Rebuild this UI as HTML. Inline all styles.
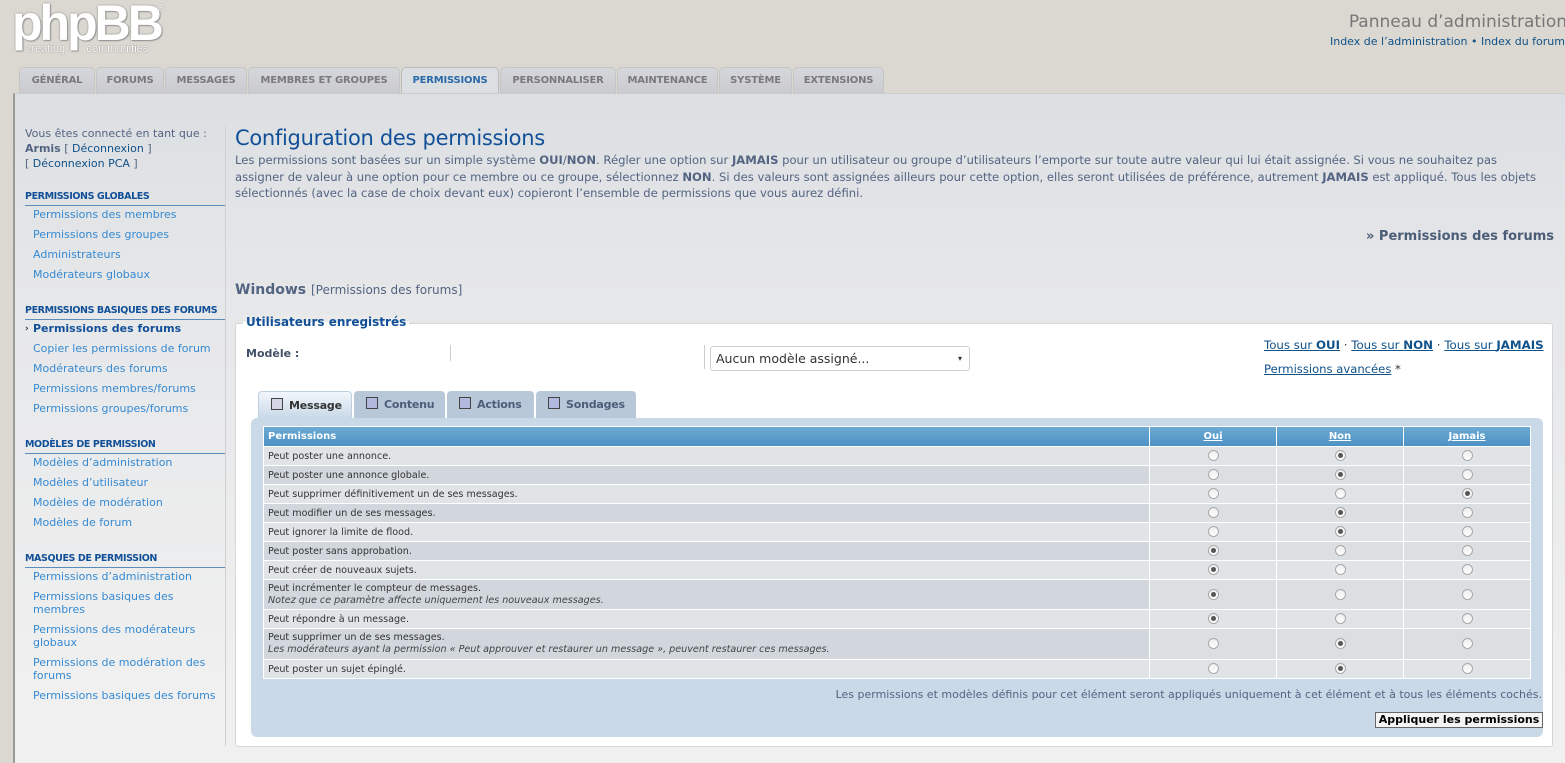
<!DOCTYPE html>
<html><head><meta charset="utf-8"><style>
*{box-sizing:border-box;margin:0;padding:0}
body{width:1565px;height:753px;overflow:hidden;background:#dbd8d1;font-family:"DejaVu Sans","Liberation Sans",sans-serif;position:relative;color:#536482}
.abs{position:absolute}
a{color:#105289;text-decoration:none}
.logo{left:12px;top:-2px;font-family:"Liberation Sans",sans-serif;font-weight:bold;font-size:50px;color:#fff;letter-spacing:-3px;text-shadow:0 0 2px #888,1px 1px 1px #999;line-height:50px;white-space:nowrap}
.logosm{left:26px;top:43px;font-size:11px;color:#fff;text-shadow:0 0 1px #555;font-family:"Liberation Sans",sans-serif;white-space:nowrap}
.tab{position:absolute;top:67px;height:26px;border:1px solid #c5c5c5;border-bottom:none;border-radius:5px 5px 0 0;background:linear-gradient(#d6d7da,#cacbcf);font-size:10px;font-weight:bold;color:#7a7a7a;line-height:26px;text-align:center;white-space:nowrap;letter-spacing:-.2px}
.tab.on{background:#dcdfe2;color:#2a6aa8;height:28px;border-color:#bbb}
.panel{left:13px;top:93px;width:1560px;height:670px;background:linear-gradient(#dcdfe2 0,#e6e7e9 200px,#f0f0f0 600px);border-left:2px solid #9a9a9a;border-top:1px solid #ccc}
.menu{left:25px;top:126px;width:200px;font-size:11px;line-height:15px}
.menu h3{font-size:9.5px;line-height:12px;font-weight:bold;color:#115098;border-bottom:1px solid #5a8cbc;padding-bottom:2px;margin-top:20px;margin-bottom:-1px;letter-spacing:-.4px;white-space:nowrap}
.menu a{display:block;color:#368ad2;padding-left:8px;line-height:20px}
.menu a.cur{font-weight:bold;color:#115098;position:relative}
.sep{left:225px;top:126px;width:1px;height:620px;background:#d0d0d0}
h1{left:235px;top:126px;font-family:"DejaVu Sans",sans-serif;font-weight:normal;font-size:21px;color:#115098;letter-spacing:-.3px}
.intro{left:235px;top:152px;width:1310px;font-size:11.6px;line-height:16.5px;color:#536482}
.fs{left:235px;top:323px;width:1318px;height:424px;background:#fff;border:1px solid #d5d5d5;border-radius:3px}
.legend{left:243px;top:315px;font-size:12px;font-weight:bold;color:#115098;background:linear-gradient(#eaeaea 50%,#fff 50%);padding:0 3px}
.blue{left:251px;top:418px;width:1292px;height:319px;background:#c9d9e8;border-radius:6px}
table{position:absolute;left:263px;top:426px;width:1268px;border-collapse:separate;border-spacing:1px;background:#fff;font-size:9.6px;color:#333}
th{background:linear-gradient(#6aaad3,#4e92c4);color:#fff;height:19px;font-size:10px;text-align:left;padding-left:4px}
th.c{text-align:center;text-decoration:underline;padding:0}
td{padding:0 4px;height:18px;background:#e1e4e7}
tr.e td{background:#dcdfe2}
tr.e td.p{background:#d2d7de}
td.r{text-align:center;padding:0}
i.em{color:#444}
.rd{display:inline-block;width:11px;height:11px;border:1px solid #a8a8a8;border-radius:50%;background:linear-gradient(#eee,#fff);vertical-align:middle;position:relative}
.rd.x::after{content:"";position:absolute;left:2px;top:2px;width:5px;height:5px;border-radius:50%;background:#555}
.ptab{top:391px;height:27px;padding:0 0 0 12px;background:#b8c8d8;border-radius:4px 4px 0 0;font-size:11px;font-weight:bold;color:#4c5d77;line-height:28px;white-space:nowrap;letter-spacing:-.2px}
.ptab.on{background:linear-gradient(#f2f7fb,#c9d9e8);color:#333;border:1px solid #c0d0e0;border-bottom:none}
.cb{display:inline-block;width:12px;height:12px;border:1px solid #444;background:#b3b8de;vertical-align:-1px;margin-right:6px}
</style></head><body>
<div class="abs logo">phpBB</div>
<div class="abs" style="left:156px;top:3px;font-size:10px;color:#fff;text-shadow:0 0 1px #777">®</div>
<div class="abs logosm">creating &nbsp;&nbsp;&nbsp;&nbsp;&nbsp;&nbsp;communities</div>
<div class="abs" style="right:-2px;top:12px;font-size:17px;color:#777;font-family:'DejaVu Sans',sans-serif;white-space:nowrap">Panneau d’administration</div>
<div class="abs" style="right:0;top:35px;font-size:11px;color:#105289;white-space:nowrap">Index de l’administration • Index du forum</div>
<div class="tab" style="left:19px;width:76px">GÉNÉRAL</div>
<div class="tab" style="left:96px;width:68px">FORUMS</div>
<div class="tab" style="left:165px;width:82px">MESSAGES</div>
<div class="tab" style="left:248px;width:152px">MEMBRES ET GROUPES</div>
<div class="tab on" style="left:401px;width:98px">PERMISSIONS</div>
<div class="tab" style="left:500px;width:116px">PERSONNALISER</div>
<div class="tab" style="left:617px;width:101px">MAINTENANCE</div>
<div class="tab" style="left:719px;width:73px">SYSTÈME</div>
<div class="tab" style="left:793px;width:91px">EXTENSIONS</div>
<div class="abs panel"></div>
<div class="abs menu">
<div style="color:#536482">Vous êtes connecté en tant que :<br><b>Armis</b> [ <span style="color:#105289">Déconnexion</span> ]<br>[ <span style="color:#105289">Déconnexion PCA</span> ]</div>
<h3>PERMISSIONS GLOBALES</h3>
<a>Permissions des membres</a><a>Permissions des groupes</a><a>Administrateurs</a><a>Modérateurs globaux</a>
<h3>PERMISSIONS BASIQUES DES FORUMS</h3>
<a class="cur"><span style="position:absolute;left:0;font-size:9px;color:#333">›</span>Permissions des forums</a><a>Copier les permissions de forum</a><a>Modérateurs des forums</a><a>Permissions membres/forums</a><a>Permissions groupes/forums</a>
<h3>MODÈLES DE PERMISSION</h3>
<a>Modèles d’administration</a><a>Modèles d’utilisateur</a><a>Modèles de modération</a><a>Modèles de forum</a>
<h3>MASQUES DE PERMISSION</h3>
<a>Permissions d’administration</a><a style="line-height:13px;padding:3px 0 4px 8px">Permissions basiques des membres</a><a style="line-height:13px;padding:3px 0 4px 8px">Permissions des modérateurs globaux</a><a style="line-height:13px;padding:3px 0 4px 8px">Permissions de modération des forums</a><a>Permissions basiques des forums</a>
</div>
<div class="abs sep"></div>
<h1 class="abs">Configuration des permissions</h1>
<div class="abs intro">Les permissions sont basées sur un simple système <b>OUI</b>/<b>NON</b>. Régler une option sur <b>JAMAIS</b> pour un utilisateur ou groupe d’utilisateurs l’emporte sur toute autre valeur qui lui était assignée. Si vous ne souhaitez pas assigner de valeur à une option pour ce membre ou ce groupe, sélectionnez <b>NON</b>. Si des valeurs sont assignées ailleurs pour cette option, elles seront utilisées de préférence, autrement <b>JAMAIS</b> est appliqué. Tous les objets sélectionnés (avec la case de choix devant eux) copieront l’ensemble de permissions que vous aurez défini.</div>
<div class="abs" style="right:11px;top:229px;font-size:13px;font-weight:bold;color:#4c5d77">» Permissions des forums</div>
<div class="abs" style="left:235px;top:282px;font-size:14px;font-weight:bold;color:#536482">Windows <span style="font-weight:normal;font-size:12px">[Permissions des forums]</span></div>
<div class="abs fs"></div>
<div class="abs legend">Utilisateurs enregistrés</div>
<div class="abs" style="left:246px;top:347px;font-size:11px;font-weight:bold;color:#425067">Modèle :</div>
<div class="abs" style="left:450px;top:345px;width:1px;height:16px;background:#ccc"></div>
<div class="abs" style="left:704px;top:345px;width:1px;height:24px;background:#ccc"></div>
<div class="abs" style="left:710px;top:346px;width:260px;height:25px;border:1px solid #d0d0d0;border-radius:3px;background:#fff;font-size:12.5px;color:#333;line-height:23px;padding-left:5px">Aucun modèle assigné...<span style="position:absolute;right:7px;font-size:8px">▾</span></div>
<div class="abs" style="left:1264px;top:338px;font-size:11.8px;color:#333;white-space:nowrap"><a style="text-decoration:underline">Tous sur <b>OUI</b></a> · <a style="text-decoration:underline">Tous sur <b>NON</b></a> · <a style="text-decoration:underline">Tous sur <b>JAMAIS</b></a></div>
<div class="abs" style="left:1264px;top:362px;font-size:11.6px;color:#333"><a style="text-decoration:underline">Permissions avancées</a> *</div>
<div class="abs blue"></div>
<div class="abs ptab on" style="left:258px;width:94px"><span class="cb" style="background:#d4d6e6"></span>Message</div>
<div class="abs ptab" style="left:354px;width:91px"><span class="cb"></span>Contenu</div>
<div class="abs ptab" style="left:447px;width:87px"><span class="cb"></span>Actions</div>
<div class="abs ptab" style="left:536px;width:100px"><span class="cb"></span>Sondages</div>
<table>
<tr><th style="width:885px">Permissions</th><th class="c" style="width:126px">Oui</th><th class="c" style="width:126px">Non</th><th class="c">Jamais</th></tr>
<tr><td class="p">Peut poster une annonce.</td><td class="r"><span class="rd"></span></td><td class="r"><span class="rd x"></span></td><td class="r"><span class="rd"></span></td></tr>
<tr class="e"><td class="p">Peut poster une annonce globale.</td><td class="r"><span class="rd"></span></td><td class="r"><span class="rd x"></span></td><td class="r"><span class="rd"></span></td></tr>
<tr><td class="p">Peut supprimer définitivement un de ses messages.</td><td class="r"><span class="rd"></span></td><td class="r"><span class="rd"></span></td><td class="r"><span class="rd x"></span></td></tr>
<tr class="e"><td class="p">Peut modifier un de ses messages.</td><td class="r"><span class="rd"></span></td><td class="r"><span class="rd x"></span></td><td class="r"><span class="rd"></span></td></tr>
<tr><td class="p">Peut ignorer la limite de flood.</td><td class="r"><span class="rd"></span></td><td class="r"><span class="rd x"></span></td><td class="r"><span class="rd"></span></td></tr>
<tr class="e"><td class="p">Peut poster sans approbation.</td><td class="r"><span class="rd x"></span></td><td class="r"><span class="rd"></span></td><td class="r"><span class="rd"></span></td></tr>
<tr><td class="p">Peut créer de nouveaux sujets.</td><td class="r"><span class="rd x"></span></td><td class="r"><span class="rd"></span></td><td class="r"><span class="rd"></span></td></tr>
<tr class="e"><td class="p" style="height:29px;line-height:12px">Peut incrémenter le compteur de messages.<br><i class="em">Notez que ce paramètre affecte uniquement les nouveaux messages.</i></td><td class="r"><span class="rd x"></span></td><td class="r"><span class="rd"></span></td><td class="r"><span class="rd"></span></td></tr>
<tr><td class="p">Peut répondre à un message.</td><td class="r"><span class="rd x"></span></td><td class="r"><span class="rd"></span></td><td class="r"><span class="rd"></span></td></tr>
<tr class="e"><td class="p" style="height:30px;line-height:12px">Peut supprimer un de ses messages.<br><i class="em">Les modérateurs ayant la permission « Peut approuver et restaurer un message », peuvent restaurer ces messages.</i></td><td class="r"><span class="rd"></span></td><td class="r"><span class="rd x"></span></td><td class="r"><span class="rd"></span></td></tr>
<tr><td class="p">Peut poster un sujet épinglé.</td><td class="r"><span class="rd"></span></td><td class="r"><span class="rd x"></span></td><td class="r"><span class="rd"></span></td></tr>
</table>
<div class="abs" style="right:23px;top:688px;font-size:11px;color:#536482">Les permissions et modèles définis pour cet élément seront appliqués uniquement à cet élément et à tous les éléments cochés.</div>
<div class="abs" style="left:1375px;top:712px;width:168px;height:16px;border:1px solid #666;background:#f4f4f4;font-size:11px;font-weight:bold;color:#000;text-align:center;line-height:14px">Appliquer les permissions</div>
</body></html>
